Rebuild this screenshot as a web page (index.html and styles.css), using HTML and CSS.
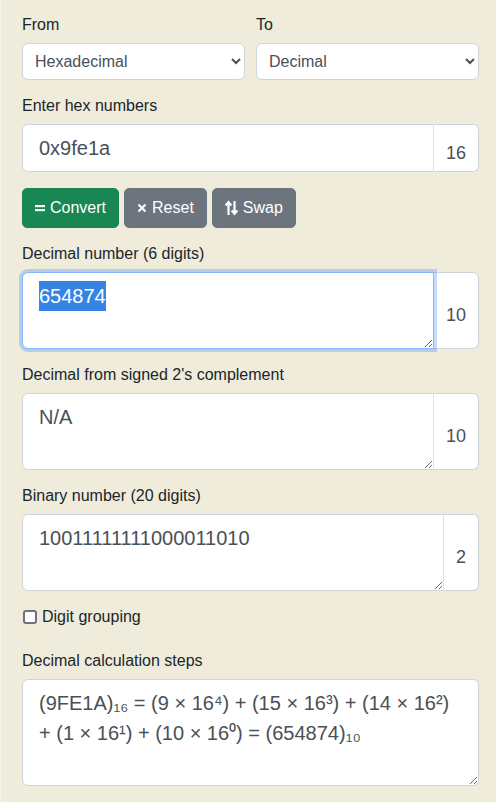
FILE: index.html
```html
<!DOCTYPE html>
<html lang="en">
<head>
<meta charset="utf-8">
<title>Hex to Decimal converter</title>
<link rel="stylesheet" href="styles.css">
</head>
<body>
<form class="calc">
  <div class="row2 group">
    <div class="col">
      <label class="lbl" for="from">From</label>
      <select id="from" class="sel"><option>Hexadecimal</option></select>
    </div>
    <div class="col">
      <label class="lbl" for="to">To</label>
      <select id="to" class="sel"><option>Decimal</option></select>
    </div>
  </div>

  <div class="group">
    <label class="lbl" for="hex">Enter hex numbers</label>
    <div class="igroup">
      <input id="hex" class="ctl inp" type="text" value="0x9fe1a">
      <span class="addon">16</span>
    </div>
  </div>

  <div class="btns">
    <button type="button" class="btn green">
      <svg class="ico" viewBox="0 0 10 10" width="10" height="10"><rect x="0" y="2" width="10" height="2.2" fill="#fff"/><rect x="0" y="6" width="10" height="2.2" fill="#fff"/></svg>Convert
    </button>
    <button type="button" class="btn gray">
      <svg class="ico" viewBox="0 0 10 10" width="10" height="10"><path d="M1.5 1.5 L8.5 8.5 M8.5 1.5 L1.5 8.5" stroke="#fff" stroke-width="2.2" fill="none"/></svg>Reset
    </button>
    <button type="button" class="btn gray">
      <svg class="ico" viewBox="0 0 13 16" width="13" height="16"><path d="M3.5 15 V2.5 M0.7 5.5 L3.5 2.2 L6.3 5.5 M9.5 1 V13.5 M6.7 10.5 L9.5 13.8 L12.3 10.5" stroke="#fff" stroke-width="2.2" fill="none"/></svg>Swap
    </button>
  </div>

  <div class="group">
    <label class="lbl" for="dec">Decimal number (6 digits)</label>
    <div class="igroup">
      <textarea id="dec" class="ctl ta" rows="2">654874</textarea>
      <span class="addon">10</span>
    </div>
  </div>

  <div class="group">
    <label class="lbl" for="sgn">Decimal from signed 2's complement</label>
    <div class="igroup">
      <textarea id="sgn" class="ctl ta" rows="2">N/A</textarea>
      <span class="addon">10</span>
    </div>
  </div>

  <div class="group">
    <label class="lbl" for="bin">Binary number (20 digits)</label>
    <div class="igroup">
      <textarea id="bin" class="ctl ta" rows="2">10011111111000011010</textarea>
      <span class="addon">2</span>
    </div>
  </div>

  <div class="check">
    <input type="checkbox" id="grp" class="cb">
    <label for="grp">Digit grouping</label>
  </div>

  <div class="group">
    <label class="lbl" for="steps">Decimal calculation steps</label>
    <textarea id="steps" class="ctl ta steps" rows="3">(9FE1A)₁₆ = (9 × 16⁴) + (15 × 16³) + (14 × 16²) + (1 × 16¹) + (10 × 16⁰) = (654874)₁₀</textarea>
  </div>
</form>
<script src="script.js"></script>
</body>
</html>
```

FILE: styles.css
```css
html, body {
  margin: 0;
  padding: 0;
}
body {
  background: #efecdc;
  font-family: "Liberation Sans", Arial, sans-serif;
  font-size: 16px;
  color: #212529;
  height: 802px;
  overflow: hidden;
  border-left: 1px solid #f6f5ec;
  box-sizing: border-box;
}
.calc {
  padding: 13px 17px 0 21px;
}
.group {
  margin-bottom: 14px;
}
.row2 {
  display: grid;
  grid-template-columns: 1fr 1fr;
  column-gap: 11px;
}
.lbl {
  display: block;
  line-height: 24px;
  margin-bottom: 6px;
}
.sel {
  display: block;
  width: 100%;
  height: 37px;
  padding: 0 8px;
  font-family: inherit;
  font-size: 16px;
  color: #495057;
  background: #fff;
  border: 1px solid #ced4da;
  border-radius: 6px;
}
.igroup {
  display: flex;
  align-items: stretch;
}
.ctl {
  flex: 1 1 auto;
  min-width: 0;
  box-sizing: border-box;
  font-family: "Liberation Sans", Arial, sans-serif;
  font-size: 20px;
  line-height: 30px;
  color: #495057;
  background: #fff;
  border: 1px solid #ced4da;
  border-radius: 6px 0 0 6px;
  padding: 8px 16px;
  margin: 0;
}
.inp {
  height: 48px;
}
.ta {
  height: 77px;
  resize: vertical;
  display: block;
}
.ta::selection {
  background: #3584e4;
  color: #fff;
}
.ctl:focus {
  outline: 0;
  border-color: #86b7fe;
  box-shadow: 0 0 0 3px rgba(13, 110, 253, 0.25);
  position: relative;
  z-index: 2;
}
.addon {
  display: flex;
  align-items: center;
  box-sizing: border-box;
  padding: 10px 12px 0;
  font-size: 18px;
  color: #495057;
  background: #fff;
  border: 1px solid #ced4da;
  border-left: 1px solid #dee2e6;
  border-radius: 0 6px 6px 0;
  margin-left: -1px;
}
.steps {
  width: 100%;
  height: 107px;
  border-radius: 6px;
}
.btns {
  display: flex;
  gap: 5px;
  margin: 16px 0 14px;
}
.btn {
  display: inline-flex;
  align-items: center;
  height: 40px;
  padding: 0 12px;
  font-family: inherit;
  font-size: 16px;
  color: #fff;
  border-radius: 5px;
  border: 1px solid transparent;
}
.btn.green {
  background: #198754;
  border-color: #198754;
}
.btn.gray {
  background: #6c757d;
  border-color: #6c757d;
}
.ico {
  margin-right: 5px;
  flex: none;
}
.check {
  display: flex;
  align-items: center;
  line-height: 24px;
  margin: 13px 0 20px;
}
.cb {
  -webkit-appearance: none;
  appearance: none;
  box-sizing: border-box;
  width: 14px;
  height: 14px;
  margin: 0 5px 0 1px;
  background: #fff;
  border: 2px solid #707080;
  border-radius: 3px;
}
```

FILE: script.js
```js
var t = document.getElementById('dec');
t.focus();
t.setSelectionRange(0, t.value.length);
```
